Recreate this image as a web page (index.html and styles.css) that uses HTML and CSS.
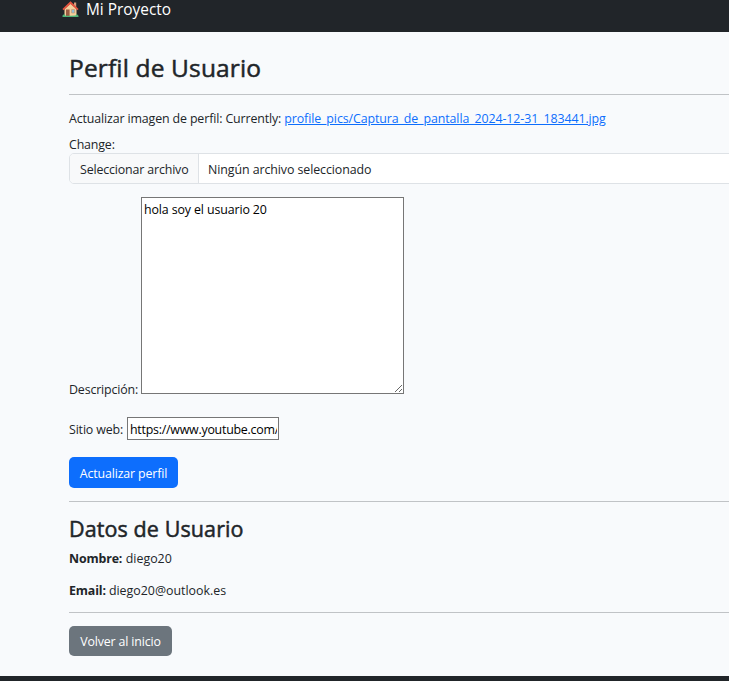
FILE: index.html
```html
<!DOCTYPE html>
<html lang="es">
<head>
<meta charset="utf-8">
<title>Mi Proyecto</title>
<link rel="stylesheet" href="styles.css">
</head>
<body>
<nav class="navbar">
  <svg class="house" viewBox="0 0 17 17" aria-hidden="true">
    <path fill="#d9a07c" d="M12 1.5h2.2V7H12z"/>
    <path fill="#f3cf9d" d="M2.5 8 8.5 2.5l6 5.5v7.5h-12z"/>
    <path fill="#e4533f" d="M8.5.3 16.6 8l-1.2 1.2-6.9-6.3-6.9 6.3L.4 8z"/>
    <path fill="#9b5b42" d="M4 8.5h3.6v7H4z"/>
    <path fill="#8fbfd9" stroke="#c99a70" stroke-width=".7" d="M9.6 8.5h3v3.5h-3z"/>
    <path fill="#4fb477" d="M.5 14.5 2.2 13l1.3 1.8H9l4.5-.2 1.2-1.6 1.8 1.7V16H.5z"/>
  </svg>
  <span class="brand">Mi Proyecto</span>
</nav>
<main class="page">
  <h2 class="title">Perfil de Usuario</h2>
  <hr>
  <form class="form">
    <p class="current"><span class="current-label">Actualizar imagen de perfil: Currently:</span> <a class="link" href="#">profile_pics/Captura_de_pantalla_2024-12-31_183441.jpg</a></p>
    <p class="change">Change:</p>
    <div class="file"><span class="file-button"><span class="pick">Seleccionar archivo</span></span><span class="file-name">Ningún archivo seleccionado</span></div>
    <div class="field bio"><label class="bio-label" for="bio">Descripción:</label><textarea id="bio" spellcheck="false">hola soy el usuario 20</textarea></div>
    <div class="field web"><label class="web-label" for="web">Sitio web:</label><input id="web" type="text" value="https://www.youtube.com/"></div>
    <button class="btn primary" type="button">Actualizar perfil</button>
  </form>
  <hr>
  <h3 class="subtitle">Datos de Usuario</h3>
  <p class="data name"><strong>Nombre:</strong> <span>diego20</span></p>
  <p class="data email"><strong>Email:</strong> <span>diego20@outlook.es</span></p>
  <hr>
  <a class="btn secondary">Volver al inicio</a>
</main>
<footer class="footer"></footer>
</body>
</html>
```
FILE: styles.css
```css
* { box-sizing: border-box; }
html { overflow: hidden; }
body {
  margin: 0;
  height: 681px;
  overflow: hidden;
  display: flex;
  flex-direction: column;
  background: #f8fafc;
  color: #212529;
  font: 12.4px/19px "Open Sans", "Noto Sans", sans-serif;
  letter-spacing: -0.15px;
}
h2, h3, p { margin: 0; font-weight: 500; white-space: nowrap; }
h2, h3 { -webkit-text-stroke: 0.5px #212529; }
p { font-weight: 400; }
hr { margin: 0; border: 0; height: 1px; background: #c0c3c6; }
.navbar {
  height: 32px;
  flex: none;
  display: flex;
  align-items: flex-start;
  gap: 7px;
  padding-left: 62px;
  background: #212529;
  color: #fff;
}
.house { width: 17px; height: 17px; margin-top: 1px; }
.brand { font-size: 15.4px; line-height: 20px; letter-spacing: 0; }
.page { flex: none; height: 644px; padding: 20px 0 0 69px; }
.title { height: 42px; font-size: 24.5px; line-height: 32px; letter-spacing: 0.15px; }
.form { height: 406px; padding-top: 14px; }
.current { height: 26px; letter-spacing: -0.13px; }
.link { color: #0d6efd; text-decoration: underline; letter-spacing: -0.1px; }
.change { height: 18px; }
.file {
  display: flex;
  height: 31px;
  margin-right: -10px;
  border: 1px solid #dee2e6;
  border-radius: 5px;
  background: #fff;
  line-height: 31px;
  overflow: hidden;
  white-space: nowrap;
}
.file-button { width: 129px; padding-left: 10px; border-right: 1px solid #dee2e6; background: #f8f9fa; }
.file-name { padding-left: 9px; letter-spacing: -0.08px; }
.field { display: flex; }
.bio { height: 197px; margin-top: 13px; align-items: flex-end; }
.bio-label { width: 72px; height: 14px; white-space: nowrap; line-height: 19px; }
textarea, input {
  font: inherit;
  letter-spacing: -0.12px;
  color: #000;
  background: #fff;
  border: 1px solid #767676;
  border-radius: 0;
  margin: 0;
}
textarea { width: 263px; height: 197px; padding: 2px; resize: both; }
.web { height: 23px; margin-top: 23px; align-items: center; }
.web-label { width: 58px; padding-top: 1px; }
input { width: 152px; height: 23px; padding: 2px 1px 0 2px; letter-spacing: -0.24px; }
.btn {
  display: flex;
  align-items: center;
  justify-content: center;
  padding: 0;
  border: 0;
  border-radius: 5px;
  color: #fff;
  font: inherit;
  letter-spacing: inherit;
}
.primary { width: 109px; height: 31px; margin-top: 17px; padding-top: 2px; background: #0d6efd; }
.secondary { width: 103px; height: 30px; margin-top: 13px; background: #6c757d; }
.subtitle { height: 47px; padding-top: 12px; font-size: 21.5px; line-height: 29px; letter-spacing: 0.1px; }
.data { height: 32px; }
.data span { letter-spacing: 0; }
.name span { margin-left: 0.5px; }
.email { height: 31px; }
.footer { flex: none; height: 5px; background: #212529; }
```
